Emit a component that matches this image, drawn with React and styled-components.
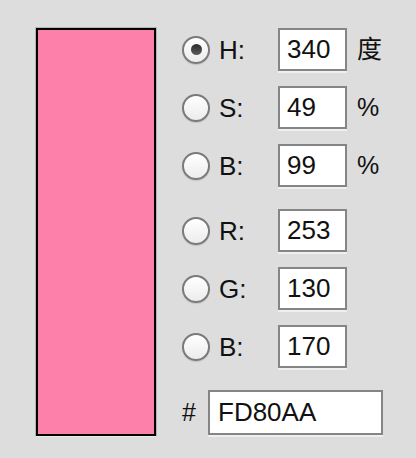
import styled, { createGlobalStyle } from "styled-components";

const GlobalStyle = createGlobalStyle`
  html, body {
    margin: 0;
    padding: 0;
    background: #dddddd;
  }
  body {
    font-family: "Liberation Sans", "Noto Sans CJK SC", sans-serif;
    color: #111;
  }
`;

const Panel = styled.div`
  width: 416px;
  height: 458px;
  box-sizing: border-box;
  padding: 27px 0 0 35px;
  display: flex;
  align-items: flex-start;
  background: #dddddd;
`;

const Swatch = styled.div`
  width: 122px;
  height: 410px;
  box-sizing: border-box;
  border: 1px solid #b4b4b4;
  border-bottom-color: #ececec;
  display: flex;
`;

const SwatchFill = styled.div`
  flex: 1;
  border: 2px solid #000;
  background: ${(p) => p.color};
`;

const Controls = styled.div`
  margin-left: 25px;
  display: flex;
  flex-direction: column;
`;

const Group = styled.div`
  display: flex;
  flex-direction: column;
  gap: 13px;
  margin-top: ${(p) => p.top || 0}px;
`;

const Row = styled.div`
  height: 45px;
  display: flex;
  align-items: center;
`;

const Radio = styled.div`
  width: 28px;
  height: 28px;
  box-sizing: border-box;
  border-radius: 50%;
  border: 2px solid #7a7a7a;
  background: linear-gradient(#ffffff, #ececec);
  box-shadow: 0 1px 1px rgba(0, 0, 0, 0.12);
  display: flex;
  align-items: center;
  justify-content: center;
  &::after {
    content: "";
    display: ${(p) => (p.checked ? "block" : "none")};
    width: 11px;
    height: 11px;
    border-radius: 50%;
    background: linear-gradient(#2a2a2a, #5c5c5c);
  }
`;

const Label = styled.span`
  width: 59px;
  margin-left: 9px;
  font-size: 26px;
  line-height: 1;
`;

const Field = styled.div`
  width: ${(p) => p.w}px;
  height: ${(p) => p.h || 43}px;
  box-sizing: border-box;
  border: 2px solid #858585;
  background: #fff;
  box-shadow: 0 2px 0 #efefef;
  display: flex;
  align-items: center;
  padding-left: ${(p) => p.pad || 7}px;
  font-size: 26px;
  color: #111;
`;

const Unit = styled.span`
  margin-left: 10px;
  font-size: 25px;
  line-height: 1;
  font-family: "Liberation Sans", "Noto Sans CJK SC", sans-serif;
`;

const Hash = styled.span`
  width: 26px;
  font-size: 25px;
`;

const hsb = [
  { key: "H", value: "340", unit: "度", checked: true },
  { key: "S", value: "49", unit: "%" },
  { key: "B", value: "99", unit: "%" },
];

const rgb = [
  { key: "R", value: "253" },
  { key: "G", value: "130" },
  { key: "B", value: "170" },
];

const ChannelRow = ({ item }) => (
  <Row>
    <Radio checked={item.checked} />
    <Label>{item.key}:</Label>
    <Field w={69}>{item.value}</Field>
    {item.unit && <Unit>{item.unit}</Unit>}
  </Row>
);

export default function App() {
  return (
    <>
      <GlobalStyle />
      <Panel>
        <Swatch>
          <SwatchFill color="#fd80aa" />
        </Swatch>
        <Controls>
          <Group>
            {hsb.map((item) => (
              <ChannelRow key={item.key} item={item} />
            ))}
          </Group>
          <Group top={20}>
            {rgb.map((item) => (
              <ChannelRow key={item.key} item={item} />
            ))}
          </Group>
          <Group top={21}>
            <Row>
              <Hash>#</Hash>
              <Field w={175} h={45} pad={8}>FD80AA</Field>
            </Row>
          </Group>
        </Controls>
      </Panel>
    </>
  );
}
